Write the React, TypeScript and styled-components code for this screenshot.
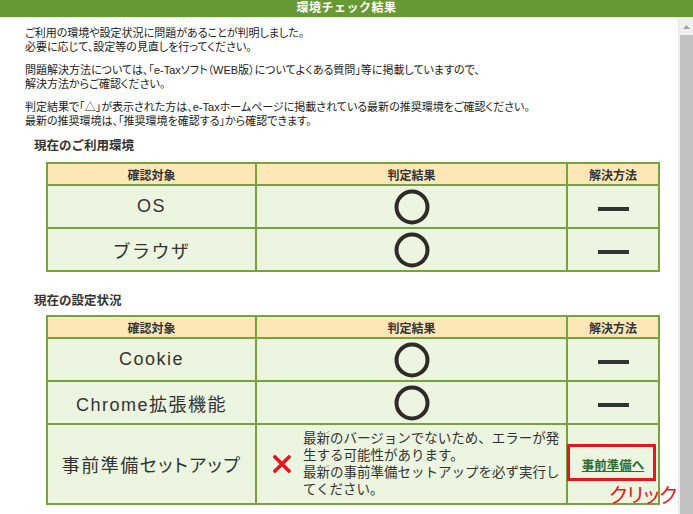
import styled, { createGlobalStyle } from 'styled-components';

const GlobalStyle = createGlobalStyle`
  html, body {
    margin: 0;
    padding: 0;
    background: #ffffff;
  }
  body {
    font-family: "Liberation Sans", "Noto Sans CJK JP", sans-serif;
    color: #333333;
  }
`;

const Page = styled.div`
  width: 693px;
  height: 514px;
  display: flex;
  flex-direction: column;
  overflow: hidden;
`;

const TitleBar = styled.div`
  height: 17px;
  background: #679a35;
  border-bottom: 1px solid #dfe8d4;
  color: #ffffff;
  font-size: 12px;
  font-weight: bold;
  line-height: 17px;
  text-align: center;
  letter-spacing: 0.5px;
`;

const Body = styled.div`
  flex: 1;
  display: flex;
  min-height: 0;
`;

const Content = styled.div`
  flex: 1;
  padding: 9px 0 0 25px;
`;

const Para = styled.p`
  margin: 0 0 10px;
  font-size: 11px;
  line-height: 13.5px;
  font-feature-settings: "palt";
  color: #222222;
`;

const Heading = styled.h3`
  margin: 0;
  padding: 1px 0 0 9px;
  font-size: 12.5px;
  line-height: 14px;
  font-weight: bold;
  color: #333333;
`;

const Table = styled.table<{ $top: number }>`
  margin: ${({ $top }) => $top}px 0 0 21px;
  border-collapse: collapse;
  table-layout: fixed;
  & + h3 {
    margin-top: 21px;
  }
`;

const Th = styled.th<{ $w: number }>`
  width: ${({ $w }) => $w}px;
  height: 20px;
  padding: 0;
  background: #fde7b7;
  border: 2px solid #78a23f;
  font-size: 12px;
  font-weight: bold;
  color: #333333;
  text-align: center;
`;

const Td = styled.td<{ $h?: number }>`
  height: ${({ $h }) => $h ?? 41}px;
  padding: 0;
  background: #ecf5e0;
  border: 2px solid #78a23f;
  text-align: center;
  vertical-align: middle;
`;

const Target = styled.span<{ $size?: number; $palt?: boolean }>`
  font-size: ${({ $size }) => $size ?? 18}px;
  letter-spacing: 1.5px;
  color: #333333;
  font-feature-settings: ${({ $palt }) => ($palt ? '"palt"' : 'normal')};
`;

const Circle = styled.svg`
  display: block;
  margin: 0 auto;
`;

const Dash = styled.div`
  width: 31px;
  height: 4px;
  margin: 4px auto 0;
  background: #333333;
`;

const ResultBox = styled.div`
  display: flex;
  align-items: center;
  gap: 12px;
  padding-left: 16px;
  text-align: left;
`;

const Message = styled.div`
  font-size: 13.5px;
  line-height: 17px;
  color: #333333;
`;

const SolveCell = styled.div`
  position: relative;
  height: 100%;
  display: flex;
  align-items: center;
  justify-content: center;
`;

const SolveLink = styled.a`
  font-size: 12.5px;
  font-weight: bold;
  color: #2f6a2f;
  text-decoration: underline;
  cursor: pointer;
`;

const Highlight = styled.div`
  position: absolute;
  left: -1px;
  top: 19px;
  width: 83px;
  height: 31px;
  border: 3px solid #e5161f;
  pointer-events: none;
`;

const ClickNote = styled.span`
  position: absolute;
  left: 41px;
  top: 60px;
  font-size: 20px;
  line-height: 22px;
  color: #e5161f;
  white-space: nowrap;
  font-feature-settings: "palt";
`;

const ScrollBar = styled.div`
  width: 14px;
  display: flex;
  flex-direction: column;
  background: #f0f0f0;
  border-left: 1px solid #e6e6e6;
`;

const ScrollArrow = styled.div`
  height: 17px;
  display: flex;
  align-items: center;
  justify-content: center;
`;

const ScrollThumb = styled.div`
  flex: 1;
  margin-left: 1px;
  background: #c1c1c1;
`;

const OkMark = () => (
  <Circle width="36" height="36" viewBox="0 0 36 36">
    <circle cx="18" cy="18" r="15.5" fill="none" stroke="#2d2a28" strokeWidth="4" />
  </Circle>
);

const NgMark = () => (
  <svg width="18" height="18" viewBox="0 0 18 18">
    <path d="M2 2 L16 16 M16 2 L2 16" stroke="#e8141e" strokeWidth="3.5" strokeLinecap="square" />
  </svg>
);

const Header = () => (
  <thead>
    <tr>
      <Th $w={207}>確認対象</Th>
      <Th $w={309}>判定結果</Th>
      <Th $w={90}>解決方法</Th>
    </tr>
  </thead>
);

const OkRow = ({ name, size }: { name: string; size?: number }) => (
  <tr>
    <Td>
      <Target $size={size}>{name}</Target>
    </Td>
    <Td>
      <OkMark />
    </Td>
    <Td>
      <Dash />
    </Td>
  </tr>
);

const App = () => {
  return (
    <Page>
      <GlobalStyle />
      <TitleBar>環境チェック結果</TitleBar>
      <Body>
        <Content>
          <Para>
            ご利用の環境や設定状況に問題があることが判明しました。
            <br />
            必要に応じて、設定等の見直しを行ってください。
          </Para>
          <Para>
            問題解決方法については、「e-Taxソフト（WEB版）についてよくある質問」等に掲載していますので、
            <br />
            解決方法からご確認ください。
          </Para>
          <Para>
            判定結果で「△」が表示された方は、e-Taxホームページに掲載されている最新の推奨環境をご確認ください。
            <br />
            最新の推奨環境は、「推奨環境を確認する」から確認できます。
          </Para>

          <Heading>現在のご利用環境</Heading>
          <Table $top={9}>
            <Header />
            <tbody>
              <OkRow name="OS" />
              <OkRow name="ブラウザ" />
            </tbody>
          </Table>

          <Heading>現在の設定状況</Heading>
          <Table $top={7}>
            <Header />
            <tbody>
              <OkRow name="Cookie" />
              <OkRow name="Chrome拡張機能" />
              <tr>
                <Td $h={78}>
                  <Target $size={18} $palt>
                    事前準備セットアップ
                  </Target>
                </Td>
                <Td $h={78}>
                  <ResultBox>
                    <NgMark />
                    <Message>
                      最新のバージョンでないため、エラーが発
                      <br />
                      生する可能性があります。
                      <br />
                      最新の事前準備セットアップを必ず実行し
                      <br />
                      てください。
                    </Message>
                  </ResultBox>
                </Td>
                <Td $h={78}>
                  <SolveCell>
                    <SolveLink>事前準備へ</SolveLink>
                    <Highlight />
                    <ClickNote>クリック</ClickNote>
                  </SolveCell>
                </Td>
              </tr>
            </tbody>
          </Table>
        </Content>
        <ScrollBar>
          <ScrollArrow>
            <svg width="7" height="4" viewBox="0 0 7 4">
              <path d="M0 4 L3.5 0 L7 4 Z" fill="#a3a3a3" />
            </svg>
          </ScrollArrow>
          <ScrollThumb />
        </ScrollBar>
      </Body>
    </Page>
  );
};

export default App;
